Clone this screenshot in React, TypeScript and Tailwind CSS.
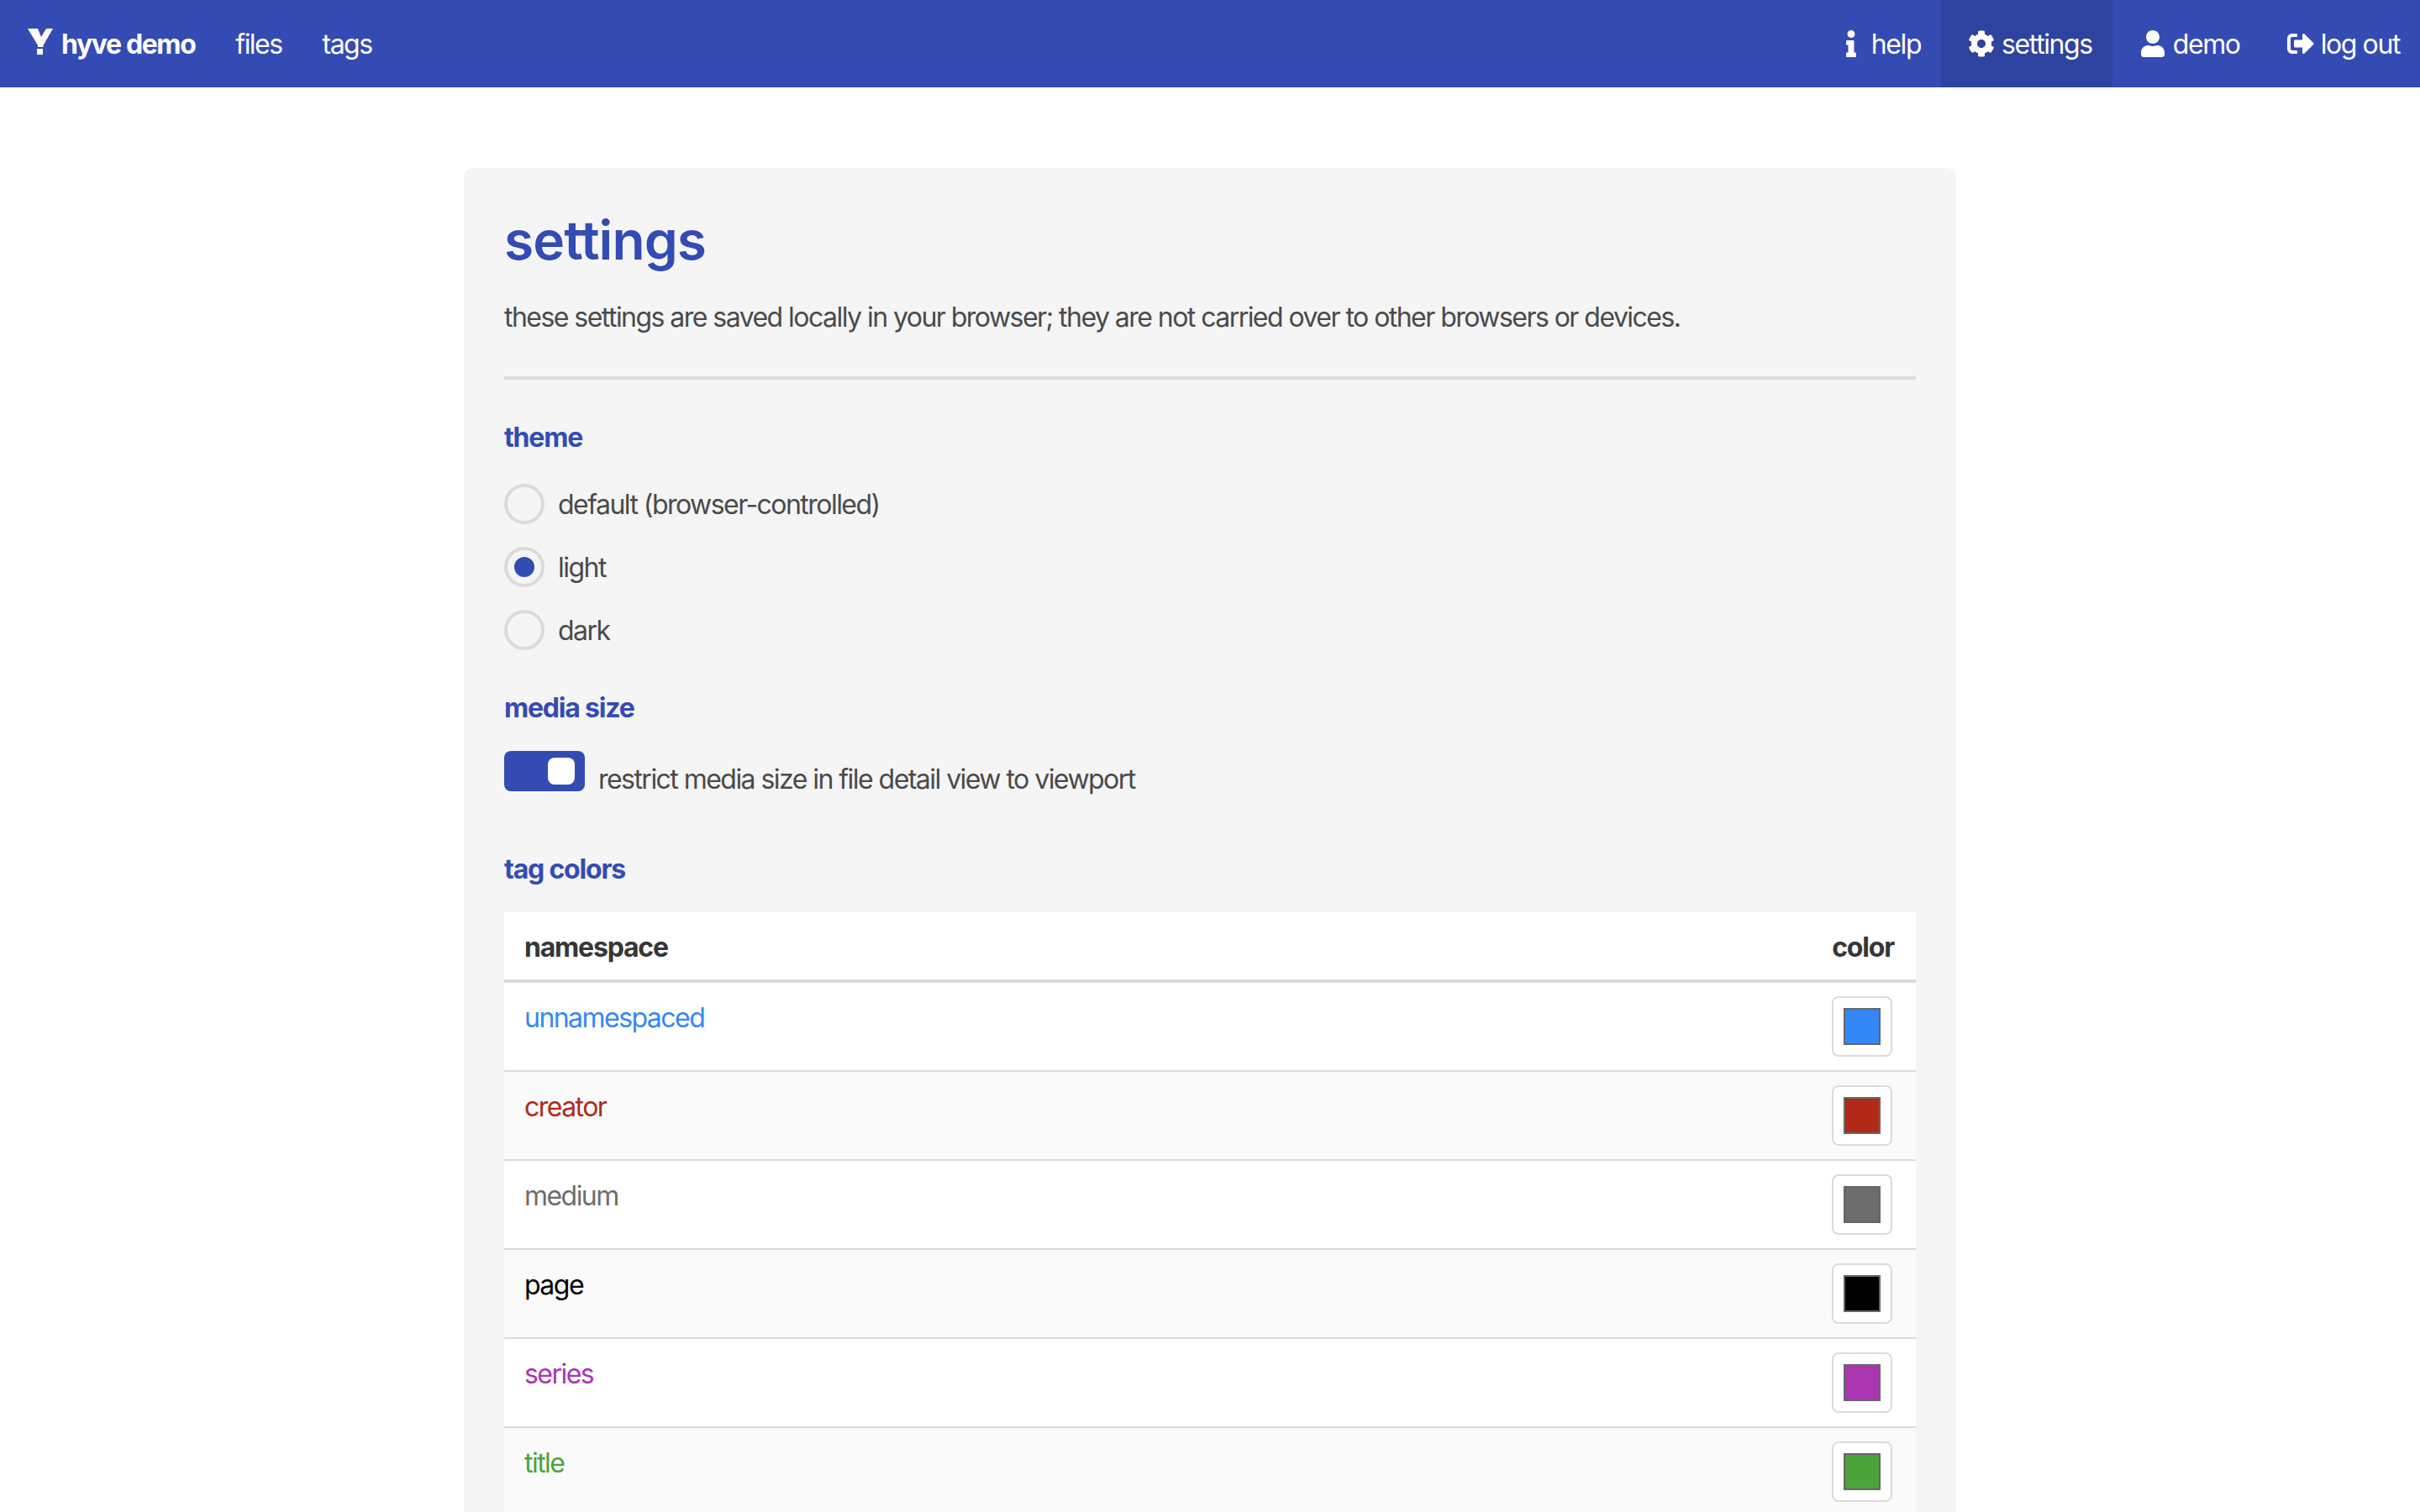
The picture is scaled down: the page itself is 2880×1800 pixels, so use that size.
import { FaCog, FaInfo, FaSignOutAlt, FaUser } from 'react-icons/fa';

const rows = [
  { name: 'unnamespaced', color: '#3488F5' },
  { name: 'creator', color: '#B22A17' },
  { name: 'medium', color: '#6D6D6D' },
  { name: 'page', color: '#000000' },
  { name: 'series', color: '#AA36B2' },
  { name: 'title', color: '#4DA33B' },
];

function Radio({ label, checked }: { label: string; checked?: boolean }) {
  return (
    <label className="flex h-[48px] items-center gap-[16px]">
      <span className="flex h-[48px] w-[48px] items-center justify-center rounded-full border-[4px] border-[#dbdbdb]">
        {checked && <span className="h-[24px] w-[24px] rounded-full bg-[#344BB4]" />}
      </span>
      <span className="pt-[2px]">{label}</span>
    </label>
  );
}

function NavItem({ icon, label, active }: { icon: React.ReactNode; label: string; active?: boolean }) {
  return (
    <a className={`flex h-full items-center px-[24px] tracking-[-1.4px] ${active ? 'bg-[#2E439F]' : ''}`}>
      <span className="flex w-[48px] justify-center">{icon}</span>
      <span className="pt-[2px]">{label}</span>
    </a>
  );
}

export default function App() {
  return (
    <div className="h-screen overflow-hidden bg-white font-['Inter',sans-serif] text-[32px] leading-[48px] tracking-[-1.54px] text-[#4a4a4a]">
      <nav className="flex h-[104px] items-center justify-between bg-[#344BB4] text-white">
        <div className="flex h-full items-center">
          <a className="flex h-full items-center gap-[9px] pl-[32px] pr-[24px] font-bold tracking-[-1.4px]">
            <svg className="mb-[4px]" width="32" height="32" viewBox="0 0 32 32" fill="#fff">
              <path d="M1 0H13L17 10L23 0H31L19.5 20V22H13V20L1 0Z" />
              <rect x="12" y="24" width="7" height="7" />
            </svg>
            <span className="pt-[2px]">hyve demo</span>
          </a>
          <a className="flex h-full items-center px-[24px] pt-[2px]">files</a>
          <a className="flex h-full items-center px-[24px] pt-[2px]">tags</a>
        </div>
        <div className="flex h-full items-center">
          <NavItem icon={<FaInfo size={32} />} label="help" />
          <NavItem icon={<FaCog size={32} />} label="settings" active />
          <NavItem icon={<FaUser size={32} />} label="demo" />
          <NavItem icon={<FaSignOutAlt size={32} />} label="log out" />
        </div>
      </nav>

      <main className="mx-auto mt-[96px] w-[1776px] rounded-[12px] bg-[#f5f5f5] px-[48px] pt-[46px] pb-[48px]">
        <h1 className="text-[64px] leading-[80px] font-semibold tracking-[-0.9px] text-[#344BB4]">settings</h1>
        <p className="mt-[28px]">
          these settings are saved locally in your browser; they are not carried over to other browsers or devices.
        </p>
        <hr className="mt-[46px] h-[4px] border-0 bg-[#dbdbdb]" />

        <h2 className="mt-[45px] font-bold tracking-[-1.2px] text-[#344BB4]">theme</h2>
        <div className="mt-[31px] flex flex-col gap-[27px]">
          <Radio label="default (browser-controlled)" />
          <Radio label="light" checked />
          <Radio label="dark" />
        </div>

        <h2 className="mt-[45px] font-bold tracking-[-1.2px] text-[#344BB4]">media size</h2>
        <div className="mt-[27px] flex items-start gap-[16px]">
          <span className="flex h-[48px] w-[96px] items-center justify-end rounded-[8px] bg-[#344BB4] px-[12px]">
            <span className="h-[32px] w-[32px] rounded-[8px] bg-white" />
          </span>
          <span className="mt-[10px]">restrict media size in file detail view to viewport</span>
        </div>

        <h2 className="mt-[59px] font-bold tracking-[-1.2px] text-[#344BB4]">tag colors</h2>
        <table className="mt-[27px] w-full border-collapse bg-white">
          <thead>
            <tr className="border-b-[4px] border-[#dbdbdb]">
              <th className="px-[24px] pt-[18px] pb-[14px] text-left font-bold tracking-[-1.2px] text-[#363636]">namespace</th>
              <th className="w-[100px] pt-[18px] pr-[26px] pb-[14px] pl-[24px] text-right font-bold tracking-[-1.2px] text-[#363636]">color</th>
            </tr>
          </thead>
          <tbody>
            {rows.map((row) => (
              <tr key={row.name} className="border-b-[2px] border-[#dbdbdb] even:bg-[#fafafa]">
                <td className="px-[24px] pt-[18px] pb-[14px] align-top" style={{ color: row.color }}>
                  {row.name}
                </td>
                <td className="py-[16px] pr-[28px] pl-[24px] align-top">
                  <span className="ml-auto flex h-[72px] w-[72px] items-center justify-center rounded-[8px] border-[2px] border-[#dbdbdb] bg-white">
                    <span className="h-[44px] w-[44px] border-[2px] border-[#666]" style={{ backgroundColor: row.color }} />
                  </span>
                </td>
              </tr>
            ))}
          </tbody>
        </table>
      </main>
    </div>
  );
}
